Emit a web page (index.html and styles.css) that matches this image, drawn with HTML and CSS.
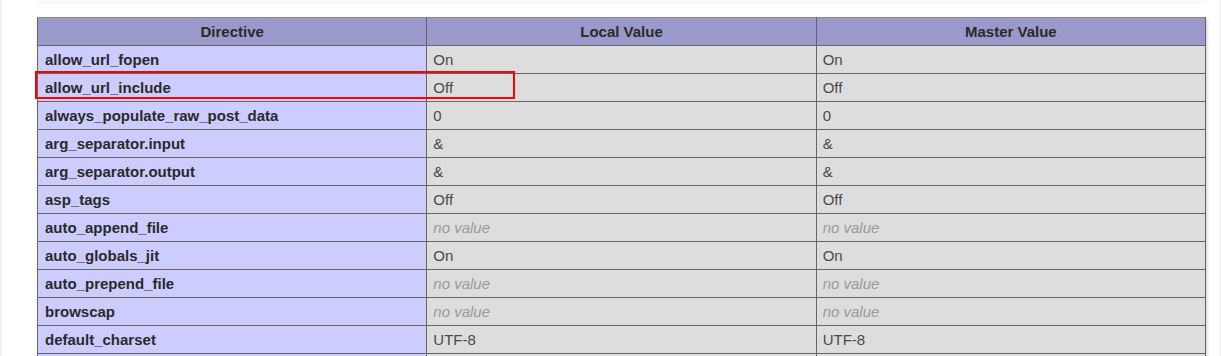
FILE: index.html
```html
<!DOCTYPE html>
<html>
<head>
<meta charset="utf-8">
<link rel="stylesheet" href="styles.css">
</head>
<body>
<div class="page">
  <div class="topcard"></div>
  <div class="wrap">
    <table class="info">
      <tr class="h"><th>Directive</th><th>Local Value</th><th>Master Value</th></tr>
      <tr><td class="e">allow_url_fopen</td><td class="v">On</td><td class="v">On</td></tr>
      <tr><td class="e">allow_url_include</td><td class="v">Off</td><td class="v">Off</td></tr>
      <tr><td class="e">always_populate_raw_post_data</td><td class="v">0</td><td class="v">0</td></tr>
      <tr><td class="e">arg_separator.input</td><td class="v">&amp;</td><td class="v">&amp;</td></tr>
      <tr><td class="e">arg_separator.output</td><td class="v">&amp;</td><td class="v">&amp;</td></tr>
      <tr><td class="e">asp_tags</td><td class="v">Off</td><td class="v">Off</td></tr>
      <tr><td class="e">auto_append_file</td><td class="v"><i>no value</i></td><td class="v"><i>no value</i></td></tr>
      <tr><td class="e">auto_globals_jit</td><td class="v">On</td><td class="v">On</td></tr>
      <tr><td class="e">auto_prepend_file</td><td class="v"><i>no value</i></td><td class="v"><i>no value</i></td></tr>
      <tr><td class="e">browscap</td><td class="v"><i>no value</i></td><td class="v"><i>no value</i></td></tr>
      <tr><td class="e">default_charset</td><td class="v">UTF-8</td><td class="v">UTF-8</td></tr>
      <tr><td class="e"></td><td class="v"></td><td class="v"></td></tr>
    </table>
    <div class="highlight"></div>
  </div>
</div>
</body>
</html>
```

FILE: styles.css
```css
html, body {
  margin: 0;
  padding: 0;
  background: #ffffff;
  overflow: hidden;
}
body {
  font-family: "Liberation Sans", Arial, sans-serif;
  color: #222;
  height: 356px;
}
.page {
  height: 356px;
  border-left: 2px solid #f2f2f2;
  border-right: 2px solid #f4f4f4;
  box-sizing: border-box;
}
.topcard {
  margin-left: 35px;
  width: 1169px;
  height: 1px;
  background: #fff;
  box-shadow: 0 1px 3px rgba(0,0,0,0.12);
}
.wrap {
  position: relative;
  margin-left: 35px;
  margin-top: 16px;
  width: 1169px;
}
.info {
  border-collapse: collapse;
  width: 1169px;
  table-layout: fixed;
  box-shadow: 1px 2px 3px #ccc;
  font-size: 15px;
}
.info th, .info td {
  border: 1px solid #666;
  height: 27px;
  padding: 0 6px;
  line-height: 27px;
  white-space: nowrap;
  overflow: hidden;
  text-align: left;
}
.info tr:first-child th { border-top-color: #888; }
.h th {
  background: #9999cc;
  font-weight: bold;
  text-align: center;
  color: #2a2a2a;
}
.e {
  background: #ccccff;
  font-weight: bold;
  color: #2a2a2a;
  padding-left: 7px !important;
}
.v {
  background: #dddddd;
  color: #4a4a4a;
}
.v i {
  color: #9a9a9a;
}
.highlight {
  position: absolute;
  left: -2px;
  top: 54px;
  width: 476px;
  height: 24px;
  border: 2px solid #ff0000;
  pointer-events: none;
}
```
